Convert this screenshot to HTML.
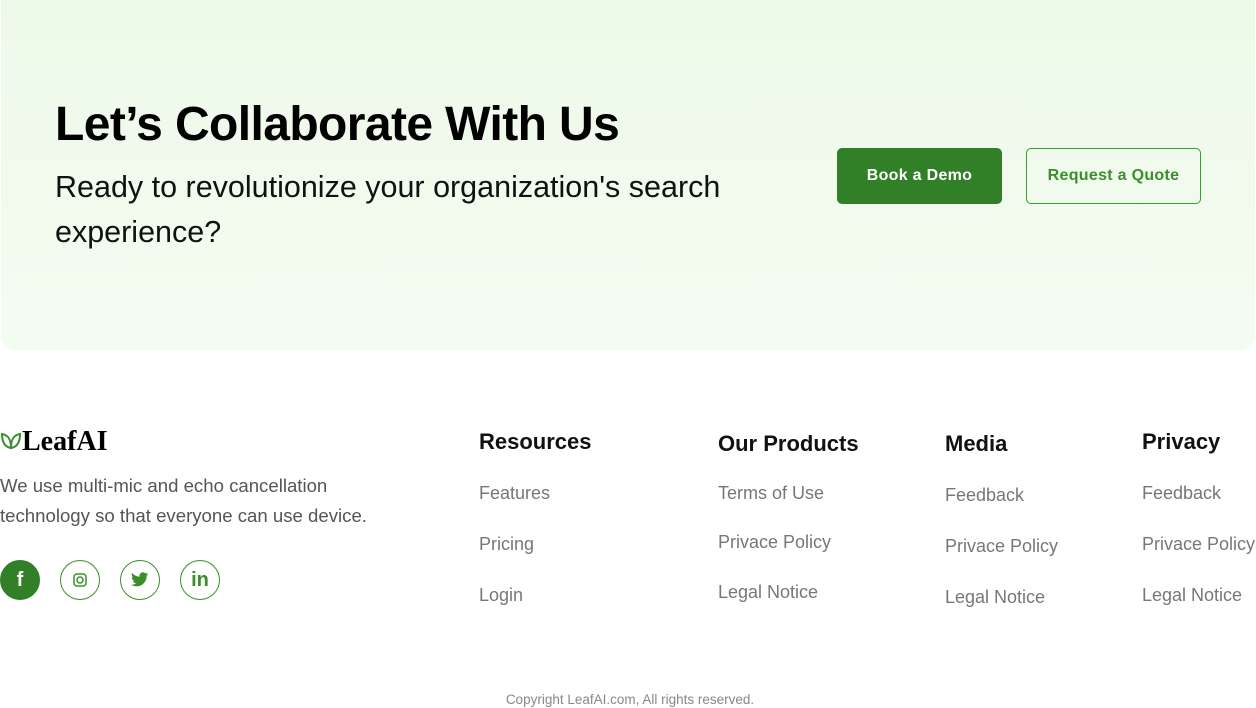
<!DOCTYPE html>
<html><head><meta charset="utf-8"><style>
*{margin:0;padding:0;box-sizing:border-box}
body{width:1256px;height:708px;background:#fff;font-family:"Liberation Sans",sans-serif;position:relative;overflow:hidden}
.hero{position:absolute;left:1px;top:0;width:1254px;height:350px;border-radius:0 0 14px 14px;background:linear-gradient(#edf9e9,#f3fcf1)}
h1{position:absolute;left:55px;top:97px;font-size:48px;font-weight:700;letter-spacing:-0.6px;color:#000}
.sub{position:absolute;left:55px;top:165px;font-size:30.5px;line-height:45px;color:#111;width:720px}
.btn{position:absolute;top:148px;height:56px;border-radius:5px;font-weight:700;font-size:16px;display:flex;align-items:center;justify-content:center;letter-spacing:.3px}
.b1{left:837px;width:165px;background:#317f27;color:#fff}
.b2{left:1026px;width:175px;border:1px solid #3a9a2c;color:#3a8f2a}
.logo{position:absolute;left:0;top:426px;display:flex;align-items:center;font-family:"Liberation Serif",serif;font-weight:700;font-size:28px;color:#000}
.desc{position:absolute;left:0;top:471px;font-size:18.6px;line-height:29.5px;color:#555}
.soc{position:absolute;top:560px;width:40px;height:40px;border-radius:50%;border:1.5px solid #3a8f2a;display:flex;align-items:center;justify-content:center;color:#3a8f2a}
.col{position:absolute}
.col h3{font-size:22px;font-weight:700;color:#111}
.col a{position:absolute;left:0;font-size:18px;color:#777;white-space:nowrap}
.copy{position:absolute;top:692px;left:0;width:1260px;text-align:center;font-size:13.5px;color:#888}
</style></head><body>
<div class="hero"></div>
<h1>Let’s Collaborate With Us</h1>
<div class="sub">Ready to revolutionize your organization's search experience?</div>
<div class="btn b1">Book a Demo</div>
<div class="btn b2">Request a Quote</div>
<div class="logo"><svg width="22" height="28" viewBox="0 0 22 28"><path d="M2 6c6 1 9 5 9 14C5 19 2 14 2 6zM20 6c-6 1-9 5-9 14 6-1 9-6 9-14z" fill="none" stroke="#3a8f2a" stroke-width="2"/></svg>LeafAI</div>
<div class="desc">We use multi-mic and echo cancellation<br>technology so that everyone can use device.</div>
<div class="soc" style="left:0;background:#317f27;border-color:#317f27;color:#fff;font-weight:700;font-size:20px">f</div>
<div class="soc" style="left:60px"><svg width="14" height="14" viewBox="0 0 14 14"><rect x="1" y="1" width="12" height="12" rx="3" fill="none" stroke="#3a8f2a" stroke-width="1.5"/><circle cx="7" cy="7" r="3" fill="none" stroke="#3a8f2a" stroke-width="1.5"/></svg></div>
<div class="soc" style="left:120px"><svg width="18" height="16" viewBox="0 0 24 20"><path d="M23 2a9 9 0 0 1-2.7.8A4.7 4.7 0 0 0 22.4.2a9 9 0 0 1-3 1.1A4.7 4.7 0 0 0 11.4 5.6 13.4 13.4 0 0 1 1.6.7a4.7 4.7 0 0 0 1.5 6.3A4.7 4.7 0 0 1 1 6.4a4.7 4.7 0 0 0 3.8 4.6 4.7 4.7 0 0 1-2.1.1 4.7 4.7 0 0 0 4.4 3.3A9.5 9.5 0 0 1 0 16.3 13.4 13.4 0 0 0 7.3 18.5c8.7 0 13.5-7.3 13.5-13.5v-.6A9.6 9.6 0 0 0 23 2z" fill="#3a8f2a"/></svg></div>
<div class="soc" style="left:180px;font-weight:700;font-size:20px">in</div>
<div class="col" style="left:479px;top:429px"><h3>Resources</h3><a style="top:54px">Features</a><a style="top:105px">Pricing</a><a style="top:156px">Login</a></div>
<div class="col" style="left:718px;top:431px"><h3>Our Products</h3><a style="top:52px">Terms of Use</a><a style="top:101px">Privace Policy</a><a style="top:151px">Legal Notice</a></div>
<div class="col" style="left:945px;top:431px"><h3>Media</h3><a style="top:54px">Feedback</a><a style="top:105px">Privace Policy</a><a style="top:156px">Legal Notice</a></div>
<div class="col" style="left:1142px;top:429px"><h3>Privacy</h3><a style="top:54px">Feedback</a><a style="top:105px">Privace Policy</a><a style="top:156px">Legal Notice</a></div>
<div class="copy">Copyright LeafAI.com, All rights reserved.</div>
</body></html>
